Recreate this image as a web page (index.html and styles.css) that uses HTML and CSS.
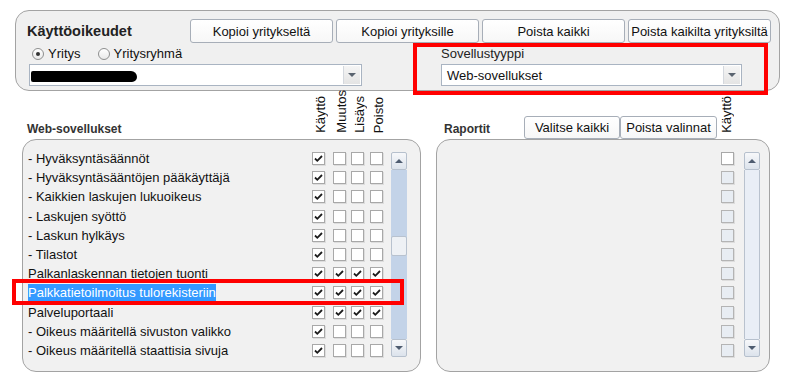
FILE: index.html
```html
<!DOCTYPE html>
<html lang="fi">
<head>
    <meta charset="UTF-8">
    <title>Käyttöoikeudet</title>
    <link rel="stylesheet" href="styles.css">
</head>
<body>

    <div class="page">
        <section class="top-panel">
            <div class="top-head">
                <h1 class="title">Käyttöoikeudet</h1>
                <div class="btn-row">
                    <button class="btn">Kopioi yritykseltä</button>
                    <button class="btn">Kopioi yrityksille</button>
                    <button class="btn">Poista kaikki</button>
                    <button class="btn">Poista kaikilta yrityksiltä</button>
                </div>
            </div>
            <div class="top-body">
                <div class="company">
                    <div class="radios">
                        <label class="radio"><span class="dot on"></span>Yritys</label>
                        <label class="radio"><span class="dot"></span>Yritysryhmä</label>
                    </div>
                    <div class="select company-select">
                        <span class="redact"></span>
                        <span class="arrow"></span>
                    </div>
                </div>
                <div class="apptype">
                    <div class="field-label">Sovellustyyppi</div>
                    <div class="select type-select">
                        <span class="select-text">Web-sovellukset</span>
                        <span class="arrow"></span>
                    </div>
                </div>
            </div>
        </section>

        <div class="columns">
            <section class="col left-col">
                <div class="col-head">
                    <h2 class="col-title">Web-sovellukset</h2>
                    <div class="vheads">
                        <div class="vcell"><span>Käyttö</span></div>
                        <div class="vcell"><span>Muutos</span></div>
                        <div class="vcell"><span>Lisäys</span></div>
                        <div class="vcell"><span>Poisto</span></div>
                    </div>
                </div>
                <div class="list-box">
                    <div class="rows" id="appRows"></div>
                    <div class="scrollbar blue">
                        <span class="sb-btn up"></span>
                        <span class="sb-track"><span class="sb-thumb"></span></span>
                        <span class="sb-btn down"></span>
                    </div>
                </div>
            </section>

            <section class="col right-col">
                <div class="col-head">
                    <h2 class="col-title raportit">Raportit</h2>
                    <button class="btn small">Valitse kaikki</button>
                    <button class="btn small">Poista valinnat</button>
                    <div class="vcell single"><span>Käyttö</span></div>
                </div>
                <div class="list-box">
                    <div class="rows" id="reportRows"></div>
                    <div class="scrollbar pale">
                        <span class="sb-btn up"></span>
                        <span class="sb-track"></span>
                        <span class="sb-btn down"></span>
                    </div>
                </div>
            </section>
        </div>
    </div>

    <!-- punaiset korostukset -->
    <div class="mark mark-type"></div>
    <div class="mark mark-row"></div>

    <script>
        var apps = [
            ["- Hyväksyntäsäännöt", [1, 0, 0, 0]],
            ["- Hyväksyntäsääntöjen pääkäyttäjä", [1, 0, 0, 0]],
            ["- Kaikkien laskujen lukuoikeus", [1, 0, 0, 0]],
            ["- Laskujen syöttö", [1, 0, 0, 0]],
            ["- Laskun hylkäys", [1, 0, 0, 0]],
            ["- Tilastot", [1, 0, 0, 0]],
            ["Palkanlaskennan tietojen tuonti", [1, 1, 1, 1]],
            ["Palkkatietoilmoitus tulorekisteriin", [1, 1, 1, 1], true],
            ["Palveluportaali", [1, 1, 1, 1]],
            ["- Oikeus määritellä sivuston valikko", [1, 0, 0, 0]],
            ["- Oikeus määritellä staattisia sivuja", [1, 0, 0, 0]]
        ];

        var tick = '<svg viewBox="0 0 11 11" width="11" height="11"><path d="M2 5.5 L4.3 7.8 L9 3" fill="none" stroke="#1c1c1c" stroke-width="1.8"/></svg>';

        function box(checked, cls) {
            return '<span class="cb ' + (cls || '') + '">' + (checked ? tick : '') + '</span>';
        }

        document.addEventListener("DOMContentLoaded", function() {
            var html = "";
            apps.forEach(function(a) {
                html += '<div class="row"><span class="row-label"><span class="' + (a[2] ? 'selected' : '') + '">' + a[0] + '</span></span><span class="checks">';
                a[1].forEach(function(c) { html += box(c); });
                html += '</span></div>';
            });
            document.getElementById("appRows").innerHTML = html;

            var rep = "";
            for (var i = 0; i < 11; i++) {
                rep += '<div class="row end">' + box(false, i === 0 ? '' : 'disabled') + '</div>';
            }
            document.getElementById("reportRows").innerHTML = rep;
        });
    </script>

</body>
</html>
```

FILE: styles.css
```css
body {
    font-family: "Liberation Sans", Arial, sans-serif;
    font-size: 13px;
    color: #111;
    background-color: #FFFFFF;
    margin: 0;
    position: relative;
}
.page {
    padding: 10px 0 0 15px;
}
.top-panel {
    box-sizing: border-box;
    width: 765px;
    height: 81px;
    border: 1px solid #A3A3A3;
    border-radius: 14px;
    background: #F0F0F0;
}
.top-head {
    display: flex;
    align-items: center;
    height: 24px;
    padding: 8px 8px 0 11px;
}
.title {
    flex: 1;
    margin: 0;
    font-size: 14.5px;
    font-weight: bold;
    color: #222;
}
.btn-row {
    display: flex;
    gap: 3px;
}
.btn {
    box-sizing: border-box;
    width: 143px;
    height: 24px;
    padding: 0;
    font-family: inherit;
    font-size: 13px;
    color: #111;
    background: linear-gradient(#FFFFFF, #F7F7F7);
    border: 1px solid #A7AEB8;
    border-radius: 3px;
}
.btn.small {
    height: 23px;
    width: 96px;
    flex: none;
}
.btn.small + .btn.small {
    width: 97px;
}
.top-body {
    display: flex;
    margin-top: 4px;
}
.company {
    padding-left: 13px;
}
.radios {
    display: flex;
    height: 14px;
    align-items: center;
}
.radio {
    display: flex;
    align-items: center;
    margin-right: 14px;
    line-height: 14px;
}
.dot {
    box-sizing: border-box;
    width: 12px;
    height: 12px;
    margin: 0 4px 0 3px;
    border: 1px solid #8E8F8F;
    border-radius: 50%;
    background: linear-gradient(#FFFFFF, #E9E9E9);
    position: relative;
}
.dot.on::after {
    content: "";
    position: absolute;
    left: 3px;
    top: 3px;
    width: 4px;
    height: 4px;
    border-radius: 50%;
    background: #333;
}
.select {
    box-sizing: border-box;
    height: 22px;
    margin-top: 3px;
    display: flex;
    align-items: center;
    background: #FFFFFF;
    border: 1px solid #A9B4C2;
}
.company-select {
    width: 333px;
}
.type-select {
    width: 301px;
}
.select-text {
    flex: 1;
    padding-left: 5px;
}
.redact {
    width: 106px;
    height: 11px;
    margin-left: 1px;
    margin-top: 2px;
    background: #000;
    border-radius: 2px 6px 5px 2px;
}
.arrow {
    box-sizing: border-box;
    width: 17px;
    height: 18px;
    margin-left: auto;
    margin-right: 1px;
    background: linear-gradient(#F5F5F5, #E4E4E4);
    border-left: 1px solid #D4D8DE;
    position: relative;
}
.arrow::after {
    content: "";
    position: absolute;
    left: 4px;
    top: 7px;
    border-left: 4px solid transparent;
    border-right: 4px solid transparent;
    border-top: 4px solid #5A6470;
}
.apptype {
    margin-left: 79px;
}
.field-label {
    line-height: 14px;
    color: #222;
}
.columns {
    display: flex;
    margin-top: -1px;
}
.col {
    flex: none;
}
.left-col {
    margin-left: 7px;
    width: 399px;
}
.right-col {
    margin-left: 15px;
    width: 334px;
}
.col-head {
    display: flex;
    align-items: flex-end;
    height: 49px;
}
.col-title {
    flex: none;
    width: 285px;
    margin: 0;
    padding: 0 0 3px 5px;
    font-size: 12px;
    line-height: 14px;
    font-weight: bold;
    color: #333;
}
.col-title.raportit {
    width: 80px;
    padding-left: 8px;
}
.vheads {
    display: grid;
    grid-template-columns: 21px 18px 19px 19px;
    align-items: end;
    padding-bottom: 6px;
}
.vcell {
    padding-left: 3px;
    padding-bottom: 6px;
    display: flex;
    align-items: flex-end;
}
.vheads .vcell {
    padding-bottom: 0;
}
.vcell span {
    writing-mode: vertical-rl;
    transform: rotate(180deg);
    line-height: 12px;
    font-size: 13px;
}
.vcell.single {
    padding-left: 4px;
}
.list-box {
    box-sizing: border-box;
    display: flex;
    height: 233px;
    border: 1px solid #A3A3A3;
    border-radius: 14px;
    background: #F1F1F1;
}
.rows {
    flex: 1;
    padding: 9px 0 0 5px;
}
.row {
    display: flex;
    align-items: center;
    height: 19.2px;
}
.row.end {
    justify-content: flex-end;
}
.row-label {
    flex: none;
    width: 284px;
    white-space: nowrap;
    line-height: 17px;
}
.selected {
    background: #3399FF;
    color: #FFFFFF;
    display: inline-block;
}
.checks {
    display: grid;
    grid-template-columns: 21px 18px 19px 19px;
}
.cb {
    box-sizing: border-box;
    width: 13px;
    height: 13px;
    border: 1px solid #A8A8A8;
    background: #FFFFFF;
    box-shadow: 1px 1px 0 #DDDDDD;
    display: flex;
}
.cb.disabled {
    background: #E8EDF3;
    border-color: #B4B4B4;
}
.scrollbar {
    box-sizing: border-box;
    flex: none;
    width: 16px;
    height: 205px;
    margin: 12px 13px 0 2px;
    display: flex;
    flex-direction: column;
}
.scrollbar.pale {
    margin: 12px 9px 0 10px;
}
.sb-btn {
    box-sizing: border-box;
    height: 18px;
    background: linear-gradient(#F7F8FA, #DCE3EC);
    border: 1px solid #B6C0CD;
    border-radius: 2px;
    position: relative;
}
.sb-btn::after {
    content: "";
    position: absolute;
    left: 3px;
    border-left: 4px solid transparent;
    border-right: 4px solid transparent;
}
.sb-btn.up::after {
    top: 6px;
    border-bottom: 4px solid #4E5C70;
}
.sb-btn.down::after {
    top: 6px;
    border-top: 4px solid #4E5C70;
}
.sb-track {
    flex: 1;
    position: relative;
}
.blue .sb-track {
    background: #C3D3E8;
}
.pale .sb-track {
    background: #E9EEF6;
    border-left: 1px solid #B9C2CE;
    border-right: 1px solid #B9C2CE;
}
.sb-thumb {
    position: absolute;
    left: 0;
    right: 0;
    top: 66px;
    height: 20px;
    box-sizing: border-box;
    background: #EEF1F5;
    border: 1px solid #B8C2CF;
    border-radius: 2px;
}
.mark {
    position: absolute;
    box-sizing: border-box;
    border: 4px solid #FF0000;
}
.mark-type {
    left: 413px;
    top: 43px;
    width: 355px;
    height: 52px;
}
.mark-row {
    left: 12px;
    top: 279px;
    width: 392px;
    height: 26px;
}
```
